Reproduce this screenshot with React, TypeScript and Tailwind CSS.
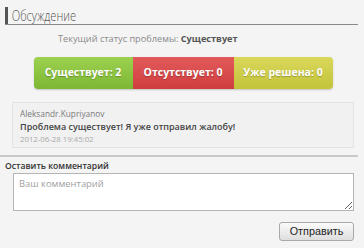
const font = { fontFamily: '"Open Sans", "Liberation Sans", sans-serif' };

export default function App() {
  return (
    <div className="w-[364px] h-[248px] bg-[#f4f4f4] overflow-hidden" style={font}>
      <div className="pt-[7px] pl-[5px] pr-[6px]">
        <div className="flex items-stretch h-[18px] border-b border-[#8a8a8a]">
          <div className="w-[3px] bg-[#555]" />
          <div className="pl-[5px] text-[15px] leading-[17px] font-light text-[#555] scale-x-[0.74] origin-left whitespace-nowrap">
            Обсуждение
          </div>
        </div>
      </div>

      <div className="mt-[8px] pl-[58px] text-[9.2px] leading-[12px] whitespace-nowrap">
        <span className="text-[#8a8a8a]">Текущий статус проблемы: </span>
        <span className="text-[#555] font-bold">Существует</span>
      </div>

      <div className="mt-[12px] flex justify-center pl-[2px]">
        <div className="flex h-[32px] rounded-[4px] overflow-hidden shadow-[0_1px_2px_rgba(0,0,0,0.2)] text-white font-bold text-[10.5px] [text-shadow:0_1px_1px_rgba(0,0,0,0.25)]">
          <div className="w-[99px] flex items-center justify-center bg-gradient-to-b from-[#9dd150] to-[#7cb733]">
            Существует: 2
          </div>
          <div className="w-[101px] flex items-center justify-center bg-gradient-to-b from-[#e25a5a] to-[#cf3d3f]">
            Отсутствует: 0
          </div>
          <div className="w-[99px] flex items-center justify-center bg-gradient-to-b from-[#d9d85a] to-[#c4c33a]">
            Уже решена: 0
          </div>
        </div>
      </div>

      <div className="mt-[13px] ml-[12px] mr-[10px] h-[46px] border border-[#e3e3e3] bg-[#f1f1f1] px-[7px] pt-[5px]">
        <div className="text-[8.3px] leading-[12px] text-[#7a7a7a]">Aleksandr.Kupriyanov</div>
        <div className="text-[9px] leading-[14px] text-[#444] font-semibold whitespace-nowrap">
          Проблема существует! Я уже отправил жалобу!
        </div>
        <div className="text-[7.8px] leading-[11px] text-[#aaa]">2012-06-28 19:45:02</div>
      </div>

      <div className="mt-[7px] mr-[6px] h-[2px] bg-[#c9c9c9]" />

      <div className="mt-[3px] pl-[5px] text-[8.6px] leading-[12px] font-semibold text-[#333]">
        Оставить комментарий
      </div>

      <div className="mt-[1px] ml-[13px] mr-[10px]">
        <textarea
          placeholder="Ваш комментарий"
          className="block w-full h-[38px] bg-white border border-[#b5b5b5] px-[5px] py-[3px] text-[9.4px] leading-[13px] text-[#333] placeholder:text-[#a0a0a0] resize-y outline-none"
        />
      </div>

      <div className="mt-[11px] mr-[10px] flex justify-end">
        <button
          className="w-[75px] h-[19px] rounded-[3px] border border-[#a9a9a9] bg-gradient-to-b from-[#fbfbfb] to-[#dedede] text-[10.8px] leading-[17px] text-[#222]"
          style={{ fontFamily: '"Liberation Sans", Arial, sans-serif' }}
        >
          Отправить
        </button>
      </div>
    </div>
  );
}
